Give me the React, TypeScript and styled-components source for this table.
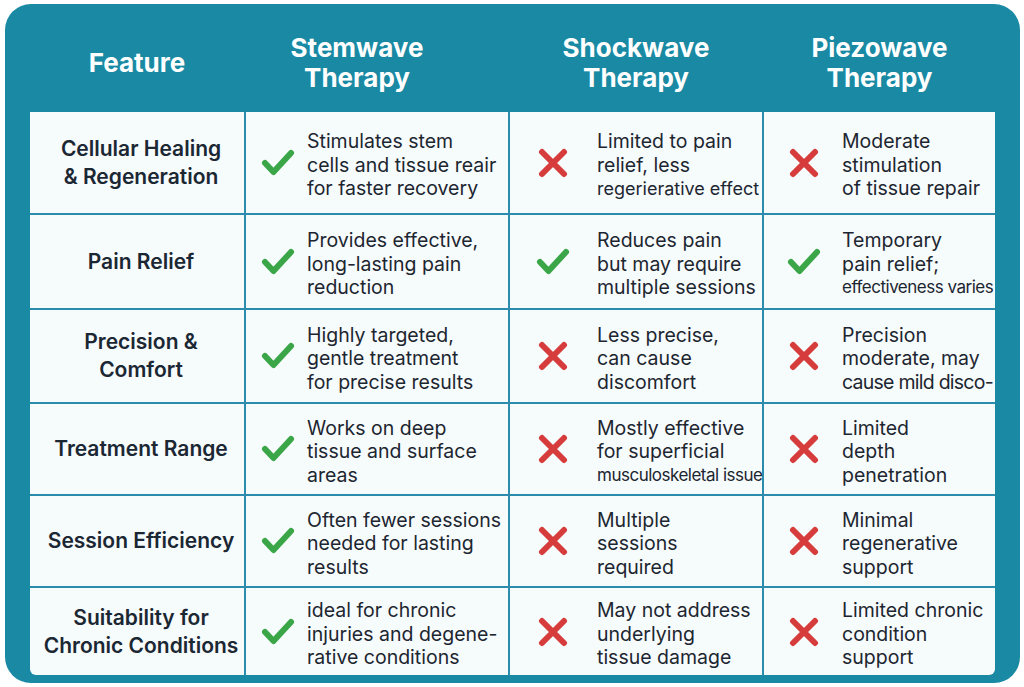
import React from "react";
import styled, { createGlobalStyle } from "styled-components";

const Global = createGlobalStyle`
  html, body { margin: 0; padding: 0; background: #ffffff; }
  body { font-family: Inter, "Noto Sans", sans-serif; }
  * { box-sizing: border-box; }
`;

const COLS = "214px 262px 252px 231px";
const TEAL = "#1a8aa4";
const LINE = "#2c8cad";
const FONT = `Inter, "Noto Sans", sans-serif`;

const Frame = styled.div`
  margin: 4px 4px 4px 5px;
  width: 1015px;
  height: 679px;
  background: ${TEAL};
  border-radius: 26px;
  padding: 0 25px 8px 25px;
  display: flex;
  flex-direction: column;
`;

const HeaderRow = styled.div`
  display: grid;
  grid-template-columns: ${COLS};
  column-gap: 2px;
  height: 108px;
`;

const HeaderCell = styled.div<{ $shift?: number }>`
  display: flex;
  flex-direction: column;
  align-items: center;
  justify-content: center;
  text-align: center;
  padding-top: 9px;
  padding-right: ${(p) => (p.$shift ? p.$shift : 0)}px;
  color: #ffffff;
  font-family: ${FONT};
  font-weight: 700;
  font-size: 26px;
  line-height: 30px;
`;

const HeaderLine = styled.span`
  display: block;
  white-space: nowrap;
`;

const Table = styled.div`
  flex: 1;
  display: grid;
  grid-template-columns: ${COLS};
  grid-template-rows: 101px 93px 92px 90px 90px 1fr;
  gap: 2px;
  background: ${LINE};
  border-radius: 0 0 6px 6px;
  overflow: hidden;
`;

const FeatureCell = styled.div`
  background: #f6fbfc;
  display: flex;
  flex-direction: column;
  align-items: center;
  justify-content: center;
  text-align: center;
  color: #1b2733;
  font-family: ${FONT};
  font-weight: 600;
  font-size: 21px;
  line-height: 28px;
  padding-left: 8px;
`;

const FeatureLine = styled.span`
  display: block;
  white-space: nowrap;
`;

const ValueCell = styled.div<{ $pad: number; $gap: number }>`
  background: #f6fbfc;
  display: flex;
  align-items: center;
  padding-left: ${(p) => p.$pad}px;
  gap: ${(p) => p.$gap}px;
  overflow: hidden;
`;

const IconBox = styled.div`
  flex: 0 0 34px;
  display: flex;
  align-items: center;
  justify-content: center;
`;

const Text = styled.div`
  color: #1d2630;
  font-family: ${FONT};
  font-weight: 400;
  font-size: 19.5px;
  line-height: 23.5px;
  padding-top: 6px;
`;

const Line = styled.span<{ $size?: number; $ls?: number }>`
  display: block;
  white-space: nowrap;
  font-size: ${(p) => (p.$size ? p.$size : 19.5)}px;
  letter-spacing: ${(p) => (p.$ls ? p.$ls : 0)}px;
`;

const Check = () => (
  <svg width="34" height="30" viewBox="0 0 34 30">
    <path d="M4 15 L12.5 24 L30 5" fill="none" stroke="#3aa648" strokeWidth="6" strokeLinecap="round" strokeLinejoin="round" />
  </svg>
);

const Cross = () => (
  <svg width="30" height="30" viewBox="0 0 30 30">
    <path d="M4 4 L26 26 M26 4 L4 26" fill="none" stroke="#d63c3c" strokeWidth="6" strokeLinecap="round" />
  </svg>
);

type Fit = { size?: number; ls?: number };
type Val = { ok: boolean; lines: string[]; fit?: Record<number, Fit> };
type Row = { feature: string[]; vals: Val[] };

const colCfg = [
  { pad: 15, gap: 12 },
  { pad: 26, gap: 27 },
  { pad: 23, gap: 21 },
];

const rows: Row[] = [
  {
    feature: ["Cellular Healing", "& Regeneration"],
    vals: [
      { ok: true, lines: ["Stimulates stem", "cells and tissue reair", "for faster recovery"] },
      { ok: false, lines: ["Limited to pain", "relief, less", "regerierative effect"], fit: { 2: { size: 18 } } },
      { ok: false, lines: ["Moderate", "stimulation", "of tissue repair"] },
    ],
  },
  {
    feature: ["Pain Relief"],
    vals: [
      { ok: true, lines: ["Provides effective,", "long-lasting pain", "reduction"] },
      { ok: true, lines: ["Reduces pain", "but may require", "multiple sessions"] },
      { ok: true, lines: ["Temporary", "pain relief;", "effectiveness varies"], fit: { 2: { size: 17, ls: -0.5 } } },
    ],
  },
  {
    feature: ["Precision &", "Comfort"],
    vals: [
      { ok: true, lines: ["Highly targeted,", "gentle treatment", "for precise results"] },
      { ok: false, lines: ["Less precise,", "can cause", "discomfort"] },
      { ok: false, lines: ["Precision", "moderate, may", "cause mild disco-"], fit: { 2: { ls: -0.75 } } },
    ],
  },
  {
    feature: ["Treatment Range"],
    vals: [
      { ok: true, lines: ["Works on deep", "tissue and surface", "areas"] },
      { ok: false, lines: ["Mostly effective", "for superficial", "musculoskeletal issue"], fit: { 2: { size: 17, ls: -0.5 } } },
      { ok: false, lines: ["Limited", "depth", "penetration"] },
    ],
  },
  {
    feature: ["Session Efficiency"],
    vals: [
      { ok: true, lines: ["Often fewer sessions", "needed for lasting", "results"] },
      { ok: false, lines: ["Multiple", "sessions", "required"] },
      { ok: false, lines: ["Minimal", "regenerative", "support"] },
    ],
  },
  {
    feature: ["Suitability for", "Chronic Conditions"],
    vals: [
      { ok: true, lines: ["ideal for chronic", "injuries and degene-", "rative conditions"] },
      { ok: false, lines: ["May not address", "underlying", "tissue damage"] },
      { ok: false, lines: ["Limited chronic", "condition", "support"] },
    ],
  },
];

const headers = [
  { lines: ["Feature"], shift: 0 },
  { lines: ["Stemwave", "Therapy"], shift: 40 },
  { lines: ["Shockwave", "Therapy"], shift: 0 },
  { lines: ["Piezowave", "Therapy"], shift: 0 },
];

export default function App() {
  return (
    <>
      <Global />
      <Frame>
        <HeaderRow>
          {headers.map((h, i) => (
            <HeaderCell key={i} $shift={h.shift}>
              {h.lines.map((l, li) => (
                <HeaderLine key={li}>{l}</HeaderLine>
              ))}
            </HeaderCell>
          ))}
        </HeaderRow>
        <Table>
          {rows.map((r, ri) => (
            <React.Fragment key={ri}>
              <FeatureCell>
                {r.feature.map((f, i) => (
                  <FeatureLine key={i}>{f}</FeatureLine>
                ))}
              </FeatureCell>
              {r.vals.map((v, ci) => (
                <ValueCell key={ci} $pad={colCfg[ci].pad} $gap={colCfg[ci].gap}>
                  <IconBox>{v.ok ? <Check /> : <Cross />}</IconBox>
                  <Text>
                    {v.lines.map((l, li) => (
                      <Line key={li} $size={v.fit?.[li]?.size} $ls={v.fit?.[li]?.ls}>
                        {l}
                      </Line>
                    ))}
                  </Text>
                </ValueCell>
              ))}
            </React.Fragment>
          ))}
        </Table>
      </Frame>
    </>
  );
}
